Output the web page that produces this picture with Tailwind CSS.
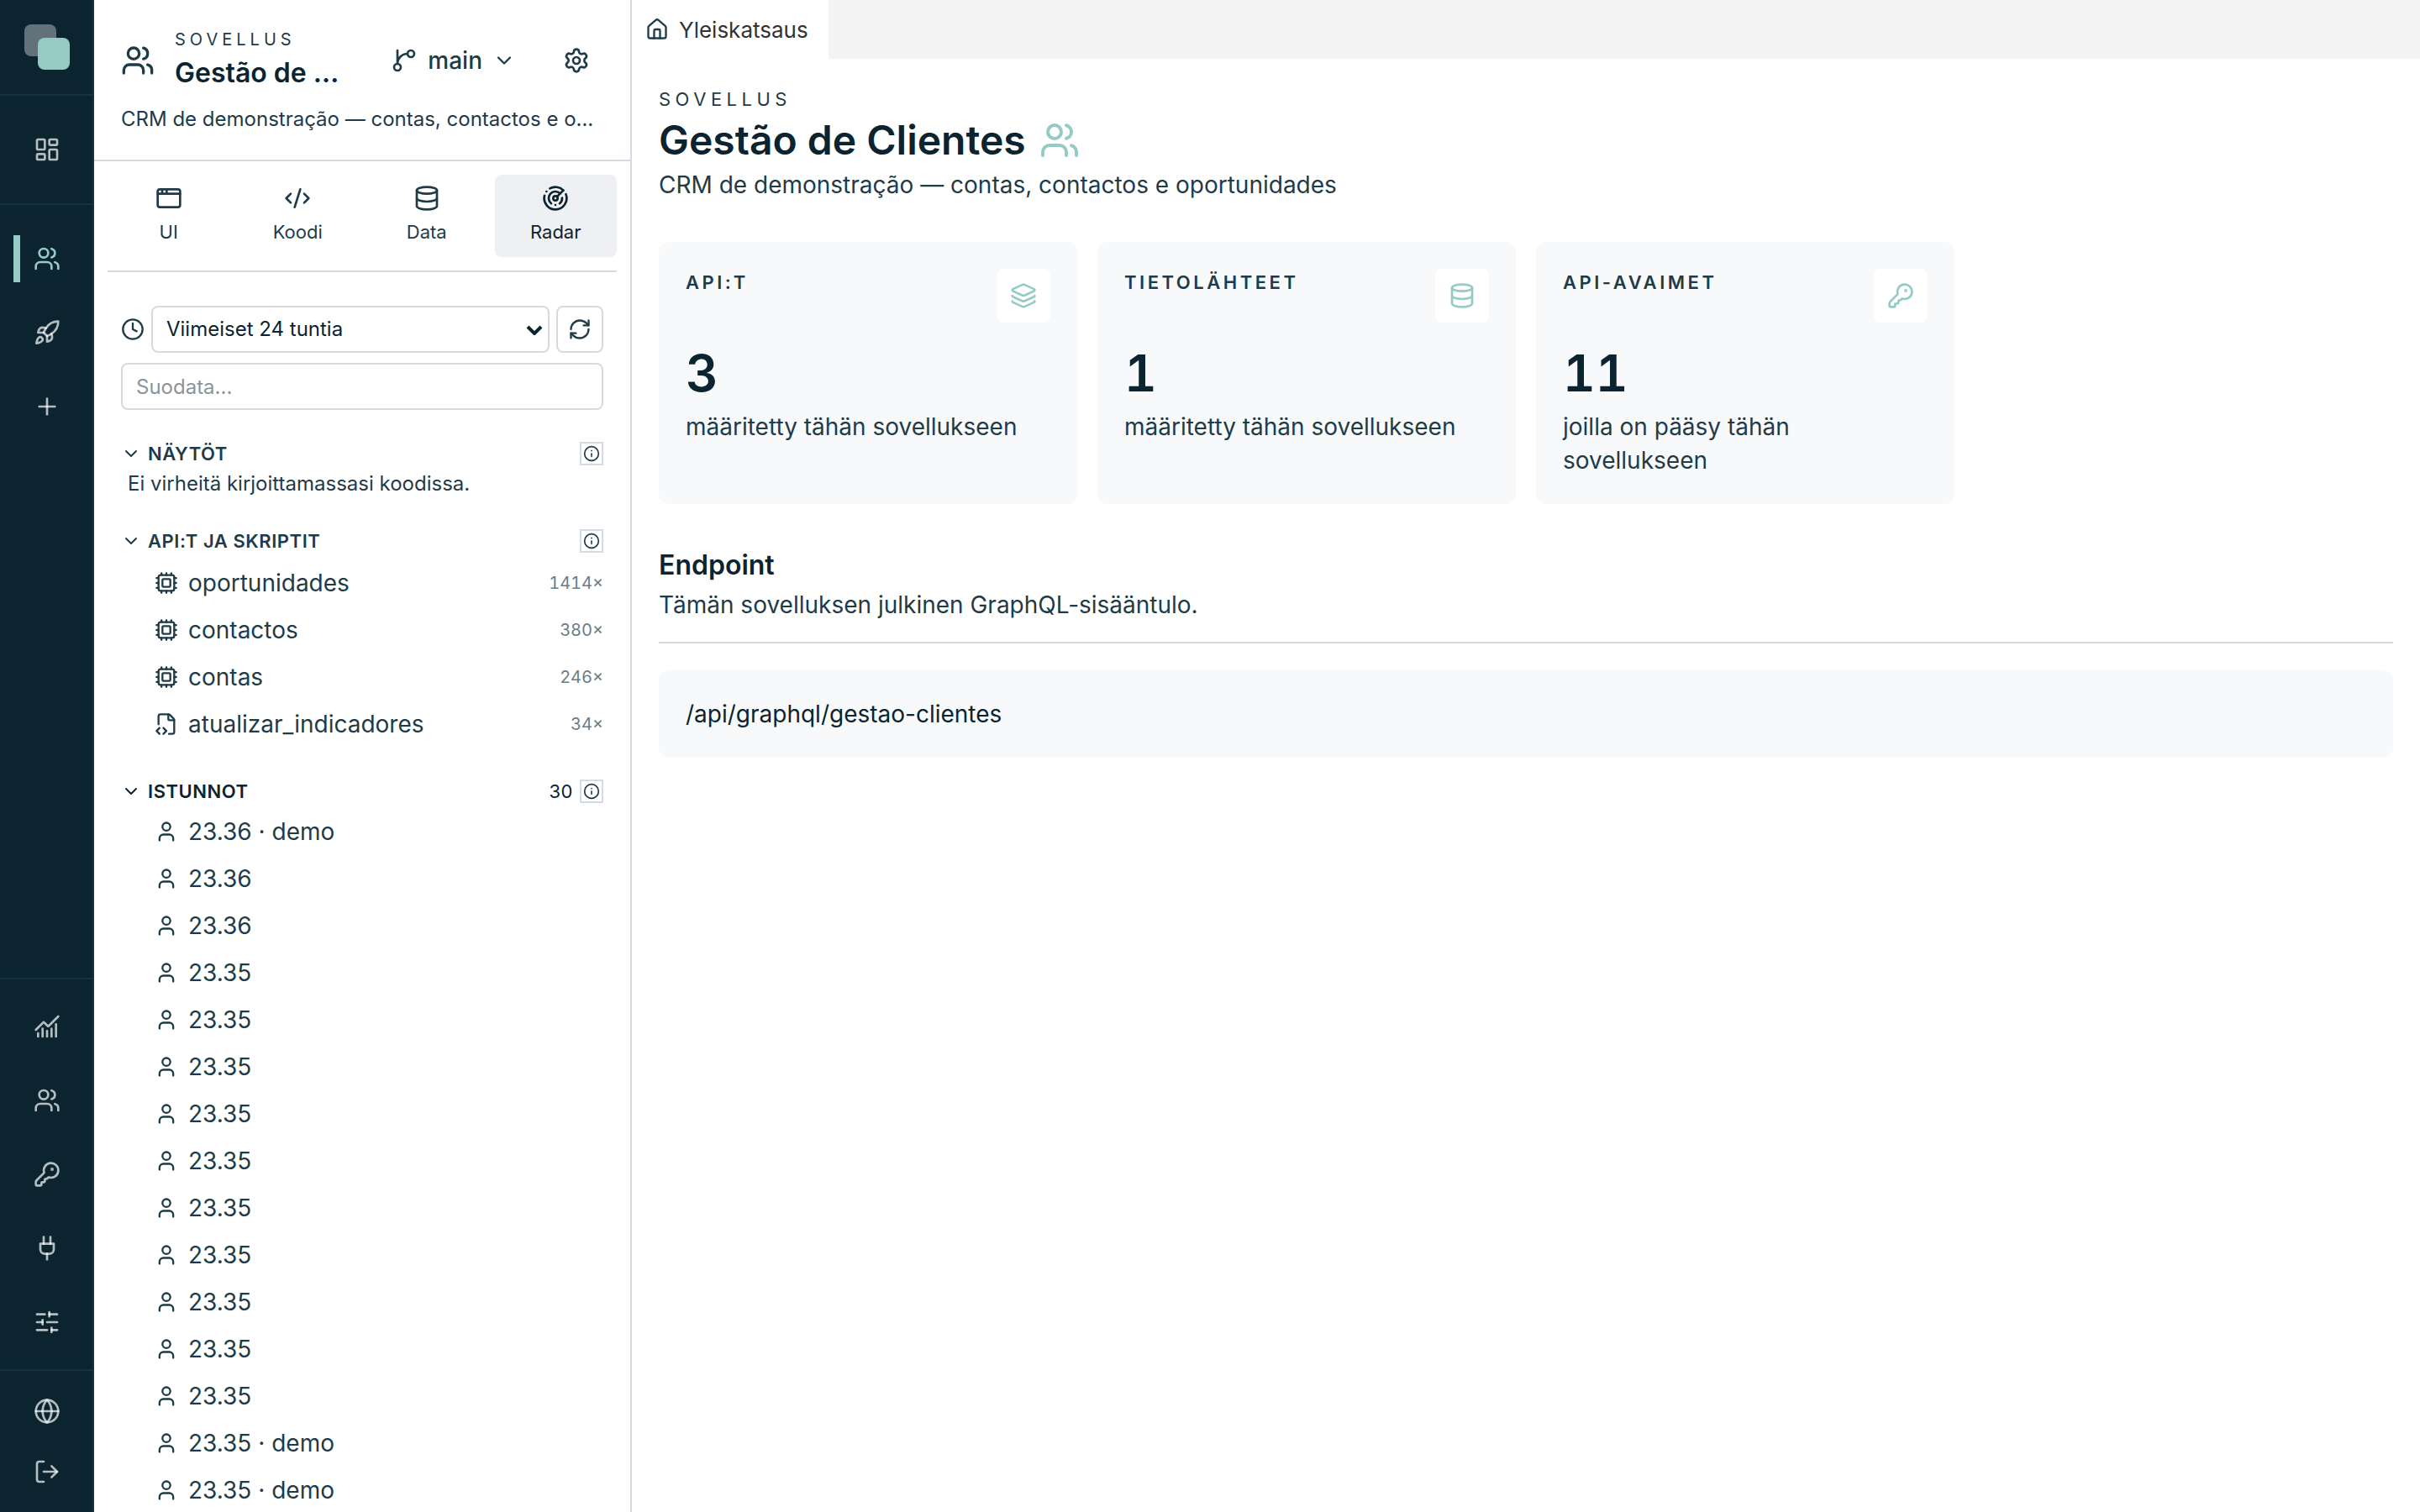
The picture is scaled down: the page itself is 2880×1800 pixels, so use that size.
<!DOCTYPE html>
<html lang="fi">
<head>
    <meta charset="UTF-8">
    <meta name="viewport" content="width=device-width, initial-scale=1.0">
    <title>Gestão de Clientes</title>
    <script src="https://cdn.jsdelivr.net/npm/@tailwindcss/browser@4"></script>
    <style>
        body {
            font-family: 'Inter', 'Liberation Sans', sans-serif;
        }
        svg {
            fill: none;
            stroke: currentColor;
            stroke-width: 2;
            stroke-linecap: round;
            stroke-linejoin: round;
            flex-shrink: 0;
        }
    </style>
</head>
<body class="flex h-screen overflow-hidden bg-white text-[28px] text-[#1f3b48]">
    <!-- Icon sprite -->
    <svg class="hidden">
        <symbol id="dashboard" viewBox="0 0 24 24"><rect width="7" height="9" x="3" y="3" rx="1"/><rect width="7" height="5" x="14" y="3" rx="1"/><rect width="7" height="9" x="14" y="12" rx="1"/><rect width="7" height="5" x="3" y="16" rx="1"/></symbol>
        <symbol id="users" viewBox="0 0 24 24"><path d="M16 21v-2a4 4 0 0 0-4-4H6a4 4 0 0 0-4 4v2"/><circle cx="9" cy="7" r="4"/><path d="M22 21v-2a4 4 0 0 0-3-3.87"/><path d="M16 3.13a4 4 0 0 1 0 7.75"/></symbol>
        <symbol id="user" viewBox="0 0 24 24"><path d="M19 21v-2a4 4 0 0 0-4-4H9a4 4 0 0 0-4 4v2"/><circle cx="12" cy="7" r="4"/></symbol>
        <symbol id="rocket" viewBox="0 0 24 24"><path d="M4.5 16.5c-1.5 1.26-2 5-2 5s3.74-.5 5-2c.71-.84.7-2.13-.09-2.91a2.18 2.18 0 0 0-2.91-.09z"/><path d="m12 15-3-3a22 22 0 0 1 2-3.95A12.88 12.88 0 0 1 22 2c0 2.72-.78 7.5-6 11a22.35 22.35 0 0 1-4 2z"/><path d="M9 12H4s.55-3.03 2-4c1.62-1.08 5 0 5 0"/><path d="M12 15v5s3.03-.55 4-2c1.08-1.62 0-5 0-5"/></symbol>
        <symbol id="plus" viewBox="0 0 24 24"><path d="M5 12h14"/><path d="M12 5v14"/></symbol>
        <symbol id="chart" viewBox="0 0 24 24"><path d="M12 16v5"/><path d="M16 14v7"/><path d="M20 10v11"/><path d="m22 3-8.646 8.646a.5.5 0 0 1-.708 0L9.354 8.354a.5.5 0 0 0-.707 0L2 15"/><path d="M4 18v3"/><path d="M8 14v7"/></symbol>
        <symbol id="key" viewBox="0 0 24 24"><path d="M2.586 17.414A2 2 0 0 0 2 18.828V21a1 1 0 0 0 1 1h3a1 1 0 0 0 1-1v-1a1 1 0 0 1 1-1h1a1 1 0 0 0 1-1v-1a1 1 0 0 1 1-1h.172a2 2 0 0 0 1.414-.586l.814-.814a6.5 6.5 0 1 0-4-4z"/><circle cx="16.5" cy="7.5" r=".5" fill="currentColor"/></symbol>
        <symbol id="plug" viewBox="0 0 24 24"><path d="M12 22v-5"/><path d="M9 8V2"/><path d="M15 8V2"/><path d="M18 8v5a4 4 0 0 1-4 4h-4a4 4 0 0 1-4-4V8Z"/></symbol>
        <symbol id="sliders" viewBox="0 0 24 24"><path d="M10 5H3"/><path d="M12 19H3"/><path d="M14 3v4"/><path d="M16 17v4"/><path d="M21 12h-9"/><path d="M21 19h-5"/><path d="M21 5h-7"/><path d="M8 10v4"/><path d="M8 12H3"/></symbol>
        <symbol id="globe" viewBox="0 0 24 24"><circle cx="12" cy="12" r="10"/><path d="M12 2a14.5 14.5 0 0 0 0 20 14.5 14.5 0 0 0 0-20"/><path d="M2 12h20"/></symbol>
        <symbol id="logout" viewBox="0 0 24 24"><path d="m16 17 5-5-5-5"/><path d="M21 12H9"/><path d="M9 21H5a2 2 0 0 1-2-2V5a2 2 0 0 1 2-2h4"/></symbol>
        <symbol id="branch" viewBox="0 0 24 24"><path d="M15 6a9 9 0 0 0-9 9V3"/><circle cx="18" cy="6" r="3"/><circle cx="6" cy="18" r="3"/></symbol>
        <symbol id="chevron" viewBox="0 0 24 24"><path d="m6 9 6 6 6-6"/></symbol>
        <symbol id="settings" viewBox="0 0 24 24"><path d="M9.671 4.136a2.34 2.34 0 0 1 4.659 0 2.34 2.34 0 0 0 3.319 1.915 2.34 2.34 0 0 1 2.33 4.033 2.34 2.34 0 0 0 0 3.831 2.34 2.34 0 0 1-2.33 4.033 2.34 2.34 0 0 0-3.319 1.915 2.34 2.34 0 0 1-4.659 0 2.34 2.34 0 0 0-3.32-1.915 2.34 2.34 0 0 1-2.33-4.033 2.34 2.34 0 0 0 0-3.831A2.34 2.34 0 0 1 6.35 6.051a2.34 2.34 0 0 0 3.319-1.915"/><circle cx="12" cy="12" r="3"/></symbol>
        <symbol id="window" viewBox="0 0 24 24"><rect x="2" y="4" width="20" height="16" rx="2"/><path d="M10 4v4"/><path d="M2 8h20"/><path d="M6 4v4"/></symbol>
        <symbol id="code" viewBox="0 0 24 24"><path d="m18 16 4-4-4-4"/><path d="m6 8-4 4 4 4"/><path d="m14.5 4-5 16"/></symbol>
        <symbol id="database" viewBox="0 0 24 24"><ellipse cx="12" cy="5" rx="9" ry="3"/><path d="M3 5V19A9 3 0 0 0 21 19V5"/><path d="M3 12A9 3 0 0 0 21 12"/></symbol>
        <symbol id="radar" viewBox="0 0 24 24"><path d="M19.07 4.93A10 10 0 0 0 6.99 3.34"/><path d="M4 6h.01"/><path d="M2.29 9.62A10 10 0 1 0 21.31 8.35"/><path d="M16.24 7.76A6 6 0 1 0 8.23 16.67"/><path d="M12 18h.01"/><path d="M17.99 11.66A6 6 0 0 1 15.77 16.67"/><circle cx="12" cy="12" r="2"/><path d="m13.41 10.59 5.66-5.66"/></symbol>
        <symbol id="clock" viewBox="0 0 24 24"><circle cx="12" cy="12" r="10"/><path d="M12 6v6l4 2"/></symbol>
        <symbol id="refresh" viewBox="0 0 24 24"><path d="M3 12a9 9 0 0 1 9-9 9.75 9.75 0 0 1 6.74 2.74L21 8"/><path d="M21 3v5h-5"/><path d="M21 12a9 9 0 0 1-9 9 9.75 9.75 0 0 1-6.74-2.74L3 16"/><path d="M8 16H3v5"/></symbol>
        <symbol id="info" viewBox="0 0 24 24"><circle cx="12" cy="12" r="10"/><path d="M12 16v-4"/><path d="M12 8h.01"/></symbol>
        <symbol id="cpu" viewBox="0 0 24 24"><path d="M12 20v2M12 2v2M17 20v2M17 2v2M2 12h2M2 17h2M2 7h2M20 12h2M20 17h2M20 7h2M7 20v2M7 2v2"/><rect x="4" y="4" width="16" height="16" rx="2"/><rect x="8" y="8" width="8" height="8" rx="1"/></symbol>
        <symbol id="file-code" viewBox="0 0 24 24"><path d="M4 12.15V4a2 2 0 0 1 2-2h8a2.4 2.4 0 0 1 1.706.706l3.588 3.588A2.4 2.4 0 0 1 20 8v12a2 2 0 0 1-2 2h-3.35"/><path d="M14 2v5a1 1 0 0 0 1 1h5"/><path d="m5 16-3 3 3 3"/><path d="m9 22 3-3-3-3"/></symbol>
        <symbol id="home" viewBox="0 0 24 24"><path d="M15 21v-8a1 1 0 0 0-1-1h-4a1 1 0 0 0-1 1v8"/><path d="M3 10a2 2 0 0 1 .709-1.528l7-6a2 2 0 0 1 2.582 0l7 6A2 2 0 0 1 21 10v9a2 2 0 0 1-2 2H5a2 2 0 0 1-2-2z"/></symbol>
        <symbol id="layers" viewBox="0 0 24 24"><path d="M12.83 2.18a2 2 0 0 0-1.66 0L2.6 6.08a1 1 0 0 0 0 1.83l8.58 3.91a2 2 0 0 0 1.66 0l8.58-3.9a1 1 0 0 0 0-1.83z"/><path d="M2 12a1 1 0 0 0 .58.91l8.6 3.91a2 2 0 0 0 1.65 0l8.58-3.9A1 1 0 0 0 22 12"/><path d="M2 17a1 1 0 0 0 .58.91l8.6 3.91a2 2 0 0 0 1.65 0l8.58-3.9A1 1 0 0 0 22 17"/></symbol>
    </svg>

    <!-- Rail -->
    <nav class="flex w-28 shrink-0 flex-col border-r-2 border-[#16323f] bg-[#0b2430] text-white/70">
        <a href="#" aria-label="Etusivu" class="flex h-[114px] items-center justify-center border-b-2 border-[#16323f] pl-[2px]">
            <svg class="size-[54px]" viewBox="0 0 54 54"><rect width="38" height="38" rx="8" fill="#63717b" stroke="none"/><rect x="16" y="16" width="38" height="38" rx="8" fill="#96cbc5" stroke="none"/></svg>
        </a>
        <div class="border-b-2 border-[#16323f] py-7 pl-[2px]">
            <a href="#" aria-label="Hallintapaneeli" class="flex h-18 items-center justify-center"><svg class="size-8"><use href="#dashboard"/></svg></a>
        </div>
        <div class="relative flex flex-1 flex-col gap-4 py-7 pl-[2px]">
            <a href="#" aria-label="Gestão de Clientes" class="flex h-18 items-center justify-center text-[#96cbc5]">
                <span class="absolute left-4 h-14 w-2 bg-[#96cbc5]"></span>
                <svg class="size-8"><use href="#users"/></svg>
            </a>
            <a href="#" aria-label="Julkaisu" class="flex h-18 items-center justify-center"><svg class="size-8"><use href="#rocket"/></svg></a>
            <button type="button" aria-label="Lisää" class="flex h-18 items-center justify-center"><svg class="size-8"><use href="#plus"/></svg></button>
        </div>
        <div class="flex flex-col gap-4 border-t-2 border-[#16323f] py-5 pl-[2px]">
            <a href="#" aria-label="Tilastot" class="flex h-18 items-center justify-center"><svg class="size-8"><use href="#chart"/></svg></a>
            <a href="#" aria-label="Käyttäjät" class="flex h-18 items-center justify-center"><svg class="size-8"><use href="#users"/></svg></a>
            <a href="#" aria-label="Avaimet" class="flex h-18 items-center justify-center"><svg class="size-8"><use href="#key"/></svg></a>
            <a href="#" aria-label="Liitännät" class="flex h-18 items-center justify-center"><svg class="size-8"><use href="#plug"/></svg></a>
            <a href="#" aria-label="Asetukset" class="flex h-18 items-center justify-center"><svg class="size-8"><use href="#sliders"/></svg></a>
        </div>
        <div class="flex flex-col border-t-2 border-[#16323f] py-3 pl-[2px]">
            <button type="button" aria-label="Kieli" class="flex h-18 items-center justify-center"><svg class="size-8"><use href="#globe"/></svg></button>
            <button type="button" aria-label="Kirjaudu ulos" class="flex h-18 items-center justify-center"><svg class="size-8"><use href="#logout"/></svg></button>
        </div>
    </nav>

    <!-- Sidebar -->
    <aside class="w-[640px] shrink-0 overflow-hidden border-r-2 border-[#d5dbe0]">
        <header class="border-b-2 border-[#d5dbe0] px-8 pt-8 pb-[30px]">
            <div class="flex items-center">
                <svg class="size-10"><use href="#users"/></svg>
                <div class="ml-6 min-w-0 flex-1">
                    <p class="text-[20px] leading-[30px] tracking-[0.25em]">SOVELLUS</p>
                    <h2 class="truncate text-[32px] leading-[50px] font-semibold text-[#0b2430]">Gestão de Clientes</h2>
                </div>
                <button type="button" class="ml-6 flex h-16 items-center gap-3 px-6 font-medium">
                    <svg class="size-8"><use href="#branch"/></svg>
                    <span>main</span>
                    <svg class="size-7"><use href="#chevron"/></svg>
                </button>
                <button type="button" aria-label="Sovelluksen asetukset" class="ml-4 flex size-16 items-center justify-center"><svg class="size-8"><use href="#settings"/></svg></button>
            </div>
            <p class="mt-3 truncate text-[24px] leading-9">CRM de demonstração — contas, contactos e oportunidades</p>
        </header>

        <div class="mx-4 grid grid-cols-4 gap-2 border-b-2 border-[#d5dbe0] py-4 text-[22px] leading-7">
            <button type="button" class="flex flex-col items-center gap-[10px] rounded-lg pt-3 pb-4"><svg class="size-8"><use href="#window"/></svg>UI</button>
            <button type="button" class="flex flex-col items-center gap-[10px] rounded-lg pt-3 pb-4"><svg class="size-8"><use href="#code"/></svg>Koodi</button>
            <button type="button" class="flex flex-col items-center gap-[10px] rounded-lg pt-3 pb-4"><svg class="size-8"><use href="#database"/></svg>Data</button>
            <button type="button" class="flex flex-col items-center gap-[10px] rounded-lg bg-[#eff0f4] pt-3 pb-4 text-[#0b2430]"><svg class="size-8"><use href="#radar"/></svg>Radar</button>
        </div>

        <div class="px-8 pt-10">
            <div class="flex items-center gap-2 text-[24px]">
                <svg class="size-7"><use href="#clock"/></svg>
                <div class="relative flex-1 text-[#0b2430]">
                    <select aria-label="Aikaväli" class="block h-14 w-full appearance-none rounded-lg border-2 border-[#d5dbe0] bg-white px-4">
                        <option>Viimeiset 24 tuntia</option>
                    </select>
                    <svg class="pointer-events-none absolute top-[23px] right-2 h-3 w-5" viewBox="0 0 20 12"><path d="m2 2 8 8 8-8" stroke-width="4" stroke-linecap="butt" stroke-linejoin="miter"/></svg>
                </div>
                <button type="button" aria-label="Päivitä" class="flex size-14 items-center justify-center rounded-lg border-2 border-[#d5dbe0]"><svg class="size-7"><use href="#refresh"/></svg></button>
            </div>
            <input type="text" aria-label="Suodata" placeholder="Suodata..." class="mt-3 block h-14 w-full rounded-lg border-2 border-[#d5dbe0] px-4 text-[24px] placeholder:text-[#8a949b]">

            <section class="mt-[38px]">
                <div class="flex items-center gap-2">
                    <svg class="size-6"><use href="#chevron"/></svg>
                    <h3 class="flex-1 text-[22px] leading-7 font-semibold tracking-[0.025em]">NÄYTÖT</h3>
                    <button type="button" aria-label="Tietoja" class="flex size-7 items-center justify-center border-2 border-[#d5dbe0]"><svg class="size-5"><use href="#info"/></svg></button>
                </div>
                <p class="mt-1 pl-2 text-[24px] leading-9">Ei virheitä kirjoittamassasi koodissa.</p>
            </section>

            <section class="mt-9">
                <div class="flex items-center gap-2">
                    <svg class="size-6"><use href="#chevron"/></svg>
                    <h3 class="flex-1 text-[22px] leading-7 font-semibold tracking-[0.025em]">API:T JA SKRIPTIT</h3>
                    <button type="button" aria-label="Tietoja" class="flex size-7 items-center justify-center border-2 border-[#d5dbe0]"><svg class="size-5"><use href="#info"/></svg></button>
                </div>
                <ul class="mt-2 pl-10">
                    <li class="flex h-14 items-center gap-3"><svg class="size-7"><use href="#cpu"/></svg><span class="flex-1">oportunidades</span><span class="text-[20px] text-[#6b7d87] tabular-nums">1414×</span></li>
                    <li class="flex h-14 items-center gap-3"><svg class="size-7"><use href="#cpu"/></svg><span class="flex-1">contactos</span><span class="text-[20px] text-[#6b7d87] tabular-nums">380×</span></li>
                    <li class="flex h-14 items-center gap-3"><svg class="size-7"><use href="#cpu"/></svg><span class="flex-1">contas</span><span class="text-[20px] text-[#6b7d87] tabular-nums">246×</span></li>
                    <li class="flex h-14 items-center gap-3"><svg class="size-7"><use href="#file-code"/></svg><span class="flex-1">atualizar_indicadores</span><span class="text-[20px] text-[#6b7d87] tabular-nums">34×</span></li>
                </ul>
            </section>

            <section class="mt-[38px]">
                <div class="flex items-center gap-2 text-[22px] leading-7 tracking-[0.025em] text-[#0b2430]">
                    <svg class="size-6"><use href="#chevron"/></svg>
                    <h3 class="flex-1 font-semibold">ISTUNNOT</h3>
                    <span>30</span>
                    <button type="button" aria-label="Tietoja" class="flex size-7 items-center justify-center border-2 border-[#d5dbe0] text-[#1f3b48]"><svg class="size-5"><use href="#info"/></svg></button>
                </div>
                <ul id="sessions" class="mt-[6px] pl-10"></ul>
            </section>
        </div>
    </aside>

    <!-- Main Content -->
    <main class="min-w-0 flex-1">
        <div class="flex bg-[#f3f3f3]">
            <a href="#" class="flex h-[70px] items-center gap-3 bg-white pr-6 pl-4 text-[26px] text-[#333333]">
                <svg class="size-7 text-[#1f3b48]"><use href="#home"/></svg>
                Yleiskatsaus
            </a>
        </div>

        <div class="p-8">
            <p class="text-[22px] leading-8 tracking-[0.25em]">SOVELLUS</p>
            <div class="flex items-center gap-4">
                <h1 class="text-[48px] leading-[66px] font-semibold text-[#0b2430]">Gestão de Clientes</h1>
                <svg class="size-12 text-[#96cbc5]"><use href="#users"/></svg>
            </div>
            <p class="leading-10">CRM de demonstração — contas, contactos e oportunidades</p>

            <div class="mt-12 grid grid-cols-4 gap-6">
                <article class="rounded-xl bg-[#f8f9fb] p-8">
                    <div class="flex items-start justify-between">
                        <h2 class="text-[22px] leading-8 font-semibold tracking-[0.16em]">API:T</h2>
                        <span class="flex size-16 items-center justify-center rounded-lg bg-white text-[#96cbc5]"><svg class="size-8"><use href="#layers"/></svg></span>
                    </div>
                    <p class="mt-7 text-[60px] leading-16 font-semibold text-[#0b2430] tabular-nums">3</p>
                    <p class="mt-3 leading-10">määritetty tähän sovellukseen</p>
                </article>
                <article class="rounded-xl bg-[#f8f9fb] p-8">
                    <div class="flex items-start justify-between">
                        <h2 class="text-[22px] leading-8 font-semibold tracking-[0.16em]">TIETOLÄHTEET</h2>
                        <span class="flex size-16 items-center justify-center rounded-lg bg-white text-[#96cbc5]"><svg class="size-8"><use href="#database"/></svg></span>
                    </div>
                    <p class="mt-7 text-[60px] leading-16 font-semibold text-[#0b2430] tabular-nums">1</p>
                    <p class="mt-3 leading-10">määritetty tähän sovellukseen</p>
                </article>
                <article class="rounded-xl bg-[#f8f9fb] p-8">
                    <div class="flex items-start justify-between">
                        <h2 class="text-[22px] leading-8 font-semibold tracking-[0.16em]">API-AVAIMET</h2>
                        <span class="flex size-16 items-center justify-center rounded-lg bg-white text-[#96cbc5]"><svg class="size-8"><use href="#key"/></svg></span>
                    </div>
                    <p class="mt-7 text-[60px] leading-16 font-semibold text-[#0b2430] tabular-nums">11</p>
                    <p class="mt-3 leading-10">joilla on pääsy tähän sovellukseen</p>
                </article>
            </div>

            <section class="mt-[52px]">
                <div class="border-b-2 border-[#d5dbe0] pb-6">
                    <h2 class="text-[32px] leading-[42px] font-semibold text-[#0b2430]">Endpoint</h2>
                    <p class="mt-[6px] leading-10">Tämän sovelluksen julkinen GraphQL-sisääntulo.</p>
                </div>
                <div class="mt-8 rounded-xl bg-[#f8f9fb] p-8 leading-10 text-[#0b2430]">/api/graphql/gestao-clientes</div>
            </section>
        </div>
    </main>

    <script>
        const sessions = [
            '23.36 · demo', '23.36', '23.36', '23.35', '23.35', '23.35', '23.35', '23.35',
            '23.35', '23.35', '23.35', '23.35', '23.35', '23.35 · demo', '23.35 · demo'
        ];
        document.getElementById('sessions').innerHTML = sessions.map(label =>
            `<li class="flex h-14 items-center gap-3"><svg class="size-7"><use href="#user"/></svg>${label}</li>`
        ).join('');
    </script>
</body>
</html>
